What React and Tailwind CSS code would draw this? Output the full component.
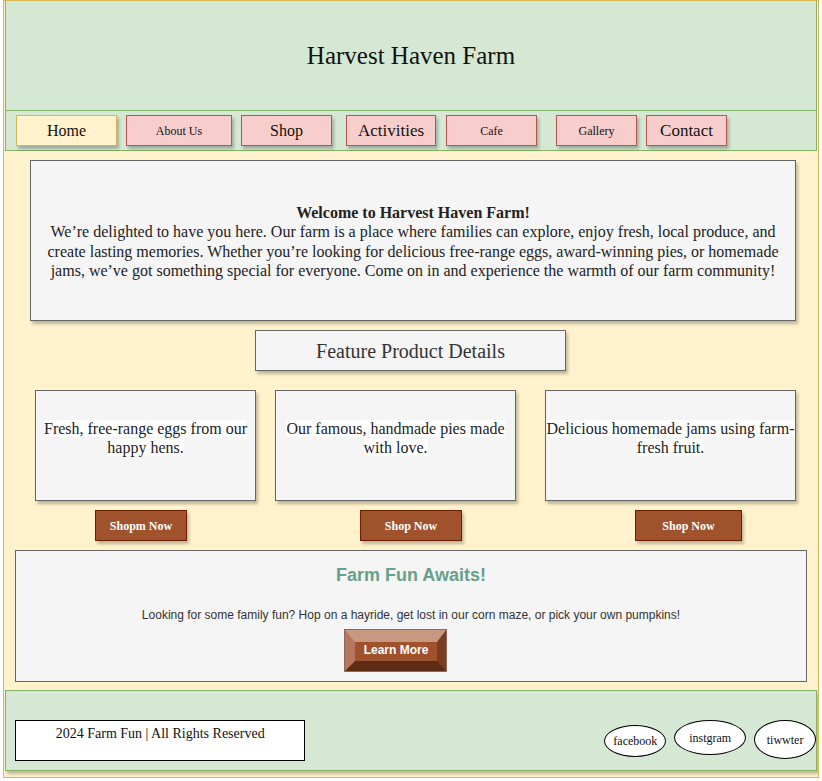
import React from "react";

// nav entries: label, width, left gap, font size, active
const navItems = [
  { label: "Home", w: "w-[101px]", ml: "ml-[10px]", size: "text-[16px]", active: true },
  { label: "About Us", w: "w-[106px]", ml: "ml-[9px]", size: "text-[12px]" },
  { label: "Shop", w: "w-[91px]", ml: "ml-[9px]", size: "text-[16px]" },
  { label: "Activities", w: "w-[90px]", ml: "ml-[14px]", size: "text-[17px]" },
  { label: "Cafe", w: "w-[91px]", ml: "ml-[10px]", size: "text-[12px]" },
  { label: "Gallery", w: "w-[81px]", ml: "ml-[19px]", size: "text-[12px]" },
  { label: "Contact", w: "w-[81px]", ml: "ml-[9px]", size: "text-[17px]" },
];

const products = [
  { text: "Fresh, free-range eggs from our happy hens.", w: "w-[221px]", ml: "ml-[31px]" },
  { text: "Our famous, handmade pies made with love.", w: "w-[241px]", ml: "ml-[19px]" },
  { text: "Delicious homemade jams using farm-fresh fruit.", w: "w-[251px]", ml: "ml-[29px]" },
];

const shopButtons = [
  { label: "Shopm Now", w: "w-[92px]", ml: "ml-[91px]" },
  { label: "Shop Now", w: "w-[102px]", ml: "ml-[173px]" },
  { label: "Shop Now", w: "w-[107px]", ml: "ml-[173px]" },
];

const serif = "font-['Liberation_Serif','Times_New_Roman',serif]";
const sans = "font-['Liberation_Sans',Arial,sans-serif]";
const boxShadow = "shadow-[2px_3px_3px_rgba(0,0,0,0.25)]";

const NavButton = ({ item }) => (
  <a
    href="#"
    className={`${item.w} ${item.ml} ${item.size} h-[31px] flex items-center justify-center border ${boxShadow} ${
      item.active
        ? "bg-[#fff2cc] border-[#d6b656]"
        : "bg-[#f8cecc] border-[#b85450]"
    } text-[#111]`}
  >
    {item.label}
  </a>
);

const Social = ({ label, w, h, mt, ml }) => (
  <a
    href="#"
    className={`${w} ${h} ${mt} ${ml} flex items-center justify-center rounded-[50%] border border-black bg-white text-[12px] text-[#111]`}
  >
    {label}
  </a>
);

export default function App() {
  return (
    <div className={`${serif} bg-white min-h-[781px]`}>
      <div className="ml-[3px] w-[816px] h-[778px] border border-[#d6b656] bg-[#fff2cc] overflow-hidden">
        {/* Header */}
        <header className="-mt-px ml-px w-[812px] h-[111px] border border-[#82b366] bg-[#d5e8d4] flex items-center justify-center">
          <h1 className="text-[25px] text-[#111]">Harvest Haven Farm</h1>
        </header>

        {/* Navigation */}
        <nav className="ml-px w-[812px] h-[40px] border border-t-0 border-[#82b366] bg-[#d5e8d4] flex items-start pt-[4px]">
          {navItems.map((item) => (
            <NavButton key={item.label} item={item} />
          ))}
        </nav>

        {/* Welcome */}
        <section
          className={`mt-[9px] ml-[26px] w-[766px] h-[161px] border border-[#666] bg-[#f5f5f5] ${boxShadow} flex flex-col items-center justify-center text-center text-[16px] leading-[19.5px] text-[#222] px-[14px]`}
        >
          <p className="font-bold mt-[2px]">Welcome to Harvest Haven Farm!</p>
          <p>
            We’re delighted to have you here. Our farm is a place where families can explore, enjoy fresh, local
            produce, and create lasting memories. Whether you’re looking for delicious free-range eggs, award-winning
            pies, or homemade jams, we’ve got something special for everyone. Come on in and experience the warmth of
            our farm community!
          </p>
        </section>

        {/* Feature title */}
        <div
          className={`mt-[9px] ml-[251px] w-[311px] h-[41px] border border-[#666] bg-[#f5f5f5] ${boxShadow} flex items-center justify-center text-[20px] text-[#333]`}
        >
          Feature Product Details
        </div>

        {/* Product cards */}
        <div className="mt-[19px] flex">
          {products.map((p) => (
            <div
              key={p.text}
              className={`${p.w} ${p.ml} h-[111px] border border-[#666] bg-[#f5f5f5] ${boxShadow} pt-[28px] text-center text-[16px] leading-[19px] text-[#222]`}
            >
              <span className="bg-white">{p.text}</span>
            </div>
          ))}
        </div>

        {/* Shop buttons */}
        <div className="mt-[9px] flex">
          {shopButtons.map((b, i) => (
            <button
              key={i}
              className={`${b.w} ${b.ml} h-[31px] border border-[#6d1f00] bg-[#a0522d] ${boxShadow} text-white text-[12px] font-bold flex items-center justify-center`}
            >
              {b.label}
            </button>
          ))}
        </div>

        {/* Farm fun */}
        <section
          className={`${sans} mt-[9px] ml-[11px] w-[792px] h-[132px] border border-[#666] bg-[#f5f5f5] flex flex-col items-center`}
        >
          <h2 className="mt-[11px] text-[18px] font-bold text-[#67a08c]">Farm Fun Awaits!</h2>
          <p className="mt-[17px] text-[12px] text-[#333]">
            Looking for some family fun? Hop on a hayride, get lost in our corn maze, or pick your own pumpkins!
          </p>
          <button className="self-start ml-[329px] mt-[6px] w-[101px] h-[41px] border-solid border-t-[12px] border-l-[10px] border-r-[9px] border-b-[10px] border-t-[#c99883] border-l-[#b87660] border-r-[#7a3d1f] border-b-[#5e2c14] bg-[#a0522d] outline outline-1 outline-[#8a6a5a] text-white text-[12px] font-bold flex items-center justify-center leading-none pb-[3px]">
            Learn More
          </button>
        </section>

        {/* Footer */}
        <footer
          className={`mt-[8px] ml-px w-[812px] h-[81px] border border-[#82b366] bg-[#d5e8d4] ${boxShadow} flex items-start`}
        >
          <div className="mt-[29px] ml-[9px] w-[291px] h-[41px] border border-black bg-white pt-[2px] text-center text-[14px] text-[#111]">
            2024 Farm Fun | All Rights Reserved
          </div>
          <Social label="facebook" w="w-[62px]" h="h-[32px]" mt="mt-[34px]" ml="ml-[299px]" />
          <Social label="instgram" w="w-[72px]" h="h-[35px]" mt="mt-[29px]" ml="ml-[8px]" />
          <Social label="tiwwter" w="w-[62px]" h="h-[39px]" mt="mt-[29px]" ml="ml-[8px]" />
        </footer>
      </div>
    </div>
  );
}
